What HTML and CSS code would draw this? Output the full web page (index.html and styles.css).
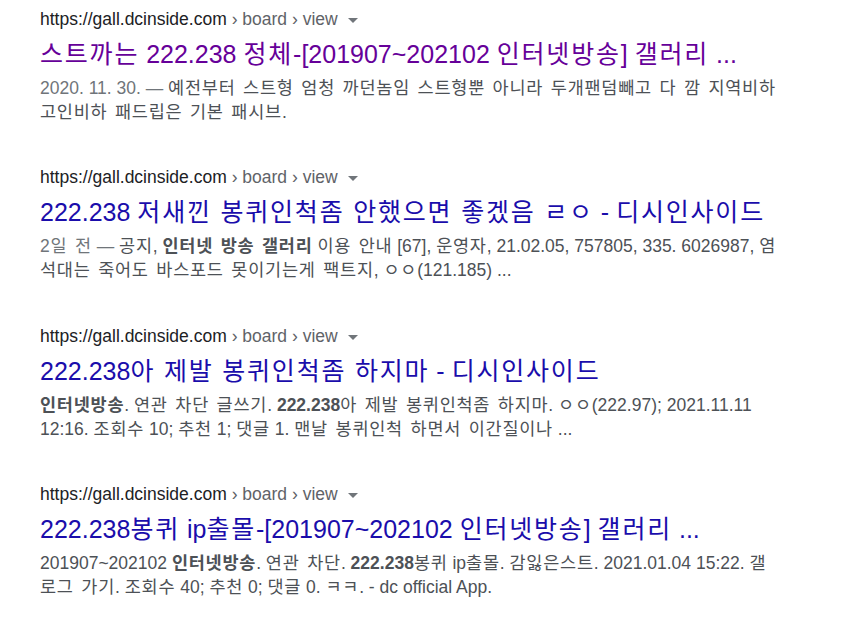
FILE: index.html
```html
<!DOCTYPE html>
<html lang="ko">
<head>
  <meta charset="UTF-8" />
  <title>검색 결과</title>
  <link rel="stylesheet" href="styles.css">
</head>
<body>
  <div class="results">
    <div class="result">
      <div class="cite">https://gall.dcinside.com<span class="crumb"> › board › view</span><span class="arrow"></span></div>
      <a class="title visited" href="#"><span class="ko">스트까는</span> 222.238 <span class="ko">정체</span>-[201907~202102 <span class="ko">인터넷방송</span>] <span class="ko">갤러리</span> ...</a>
      <p class="snippet"><span class="date">2020. 11. 30. — </span><span class="ko">예전부터 스트형 엄청 까던놈임 스트형뿐 아니라 두개팬덤빼고 다 깜 지역비하</span><br><span class="ko">고인비하 패드립은 기본 패시브</span>.</p>
    </div>

    <div class="result">
      <div class="cite">https://gall.dcinside.com<span class="crumb"> › board › view</span><span class="arrow"></span></div>
      <a class="title" href="#">222.238 <span class="ko">저새낀 봉퀴인척좀 안했으면 좋겠음 ㄹㅇ</span> - <span class="ko">디시인사이드</span></a>
      <p class="snippet"><span class="date"><span class="ko">2일 전</span> — </span><span class="ko">공지</span>, <b class="ko">인터넷 방송 갤러리</b> <span class="ko">이용 안내</span> [67], <span class="ko">운영자</span>, 21.02.05, 757805, 335. 6026987, <span class="ko">염</span><br><span class="ko">석대는 죽어도 바스포드 못이기는게 팩트지</span>, <span class="ko">ㅇㅇ</span>(121.185) ...</p>
    </div>

    <div class="result">
      <div class="cite">https://gall.dcinside.com<span class="crumb"> › board › view</span><span class="arrow"></span></div>
      <a class="title" href="#">222.238<span class="ko">아 제발 봉퀴인척좀 하지마</span> - <span class="ko">디시인사이드</span></a>
      <p class="snippet"><b class="ko">인터넷방송</b>. <span class="ko">연관 차단 글쓰기</span>. <b>222.238</b><span class="ko">아 제발 봉퀴인척좀 하지마</span>. <span class="ko">ㅇㅇ</span>(222.97); 2021.11.11<br>12:16. <span class="ko">조회수</span> 10; <span class="ko">추천</span> 1; <span class="ko">댓글</span> 1. <span class="ko">맨날 봉퀴인척 하면서 이간질이나</span> ...</p>
    </div>

    <div class="result">
      <div class="cite">https://gall.dcinside.com<span class="crumb"> › board › view</span><span class="arrow"></span></div>
      <a class="title" href="#">222.238<span class="ko">봉퀴</span> ip<span class="ko">출몰</span>-[201907~202102 <span class="ko">인터넷방송</span>] <span class="ko">갤러리</span> ...</a>
      <p class="snippet">201907~202102 <b class="ko">인터넷방송</b>. <span class="ko">연관 차단</span>. <b>222.238</b><span class="ko">봉퀴</span> ip<span class="ko">출몰</span>. <span class="ko">감잃은스트</span>. 2021.01.04 15:22. <span class="ko">갤</span><br><span class="ko">로그 가기</span>. <span class="ko">조회수</span> 40; <span class="ko">추천</span> 0; <span class="ko">댓글</span> 0. <span class="ko">ㅋㅋ</span>. - dc official App.</p>
    </div>
  </div>
</body>
</html>
```

FILE: styles.css
```css
body {
  margin: 0;
  background: #fff;
  font-family: 'Liberation Sans', Arial, 'Noto Sans CJK KR', sans-serif;
}
.results {
  padding: 7px 0 0 40px;
}
.result {
  margin-bottom: 41.4px;
}
.cite {
  font-size: 17.5px;
  line-height: 24px;
  color: #202124;
  white-space: nowrap;
}
.crumb {
  color: #5f6368;
}
.arrow {
  display: inline-block;
  width: 0;
  height: 0;
  margin-left: 10px;
  vertical-align: middle;
  border-left: 5px solid transparent;
  border-right: 5px solid transparent;
  border-top: 5px solid #70757a;
}
.title {
  display: block;
  margin-top: 7px;
  font-size: 25px;
  line-height: 32px;
  color: #1a0dab;
  text-decoration: none;
  white-space: nowrap;
}
.title.visited {
  color: #660099;
}
.title .ko {
  letter-spacing: 1.8px;
}
.snippet {
  margin: 6px 0 0;
  font-size: 17.5px;
  line-height: 24px;
  color: #4d5156;
  white-space: nowrap;
}
.snippet .ko {
  letter-spacing: 0.75px;
  word-spacing: 2px;
}
.date {
  color: #70757a;
}
.snippet b {
  color: #4d5156;
}
```
